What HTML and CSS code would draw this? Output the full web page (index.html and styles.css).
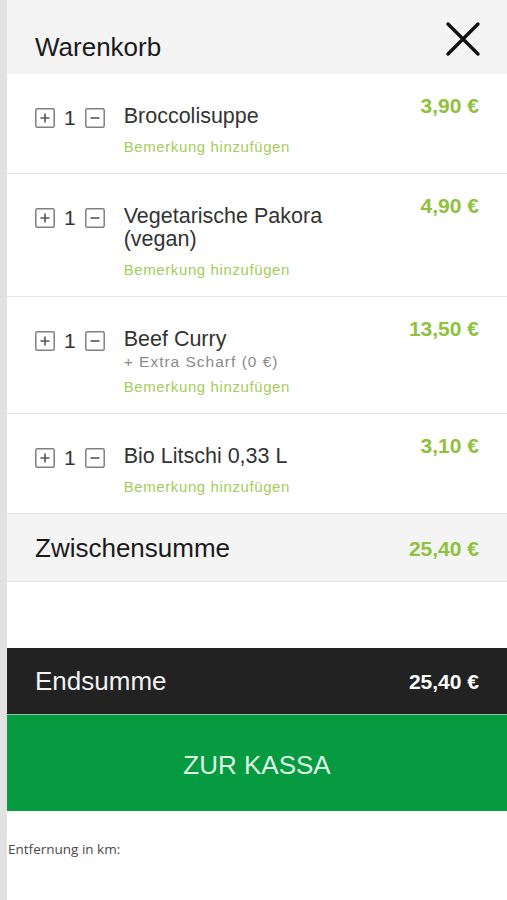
FILE: index.html
```html
<!DOCTYPE html>
<html lang="de">
<head>
    <meta charset="UTF-8">
    <meta name="viewport" content="width=device-width, initial-scale=1.0">
    <title>Warenkorb</title>
    <link rel="stylesheet" href="styles.css">
</head>
<body>
    <div class="side"></div>
    <div class="cart">
        <div class="cart-header">
            <h1>Warenkorb</h1>
            <button class="close" aria-label="Schließen">
                <svg width="36" height="36" viewBox="0 0 36 36">
                    <path d="M3 3 L33 33 M33 3 L3 33" stroke="#111" stroke-width="3.4" stroke-linecap="round" fill="none"/>
                </svg>
            </button>
        </div>

        <div class="item">
            <div class="qty">
                <svg class="qty-btn" viewBox="0 0 20 20"><rect x="0.8" y="0.8" width="18.4" height="18.4" rx="1.5"/><path d="M10 5.5 V14.5 M5.5 10 H14.5"/></svg>
                <span class="count">1</span>
                <svg class="qty-btn" viewBox="0 0 20 20"><rect x="0.8" y="0.8" width="18.4" height="18.4" rx="1.5"/><path d="M5.5 10 H14.5"/></svg>
            </div>
            <div class="info">
                <div class="name">Broccolisuppe</div>
                <div class="remark">Bemerkung hinzufügen</div>
            </div>
            <div class="price">3,90 €</div>
        </div>

        <div class="item">
            <div class="qty">
                <svg class="qty-btn" viewBox="0 0 20 20"><rect x="0.8" y="0.8" width="18.4" height="18.4" rx="1.5"/><path d="M10 5.5 V14.5 M5.5 10 H14.5"/></svg>
                <span class="count">1</span>
                <svg class="qty-btn" viewBox="0 0 20 20"><rect x="0.8" y="0.8" width="18.4" height="18.4" rx="1.5"/><path d="M5.5 10 H14.5"/></svg>
            </div>
            <div class="info">
                <div class="name">Vegetarische Pakora (vegan)</div>
                <div class="remark">Bemerkung hinzufügen</div>
            </div>
            <div class="price">4,90 €</div>
        </div>

        <div class="item">
            <div class="qty">
                <svg class="qty-btn" viewBox="0 0 20 20"><rect x="0.8" y="0.8" width="18.4" height="18.4" rx="1.5"/><path d="M10 5.5 V14.5 M5.5 10 H14.5"/></svg>
                <span class="count">1</span>
                <svg class="qty-btn" viewBox="0 0 20 20"><rect x="0.8" y="0.8" width="18.4" height="18.4" rx="1.5"/><path d="M5.5 10 H14.5"/></svg>
            </div>
            <div class="info">
                <div class="name">Beef Curry</div>
                <div class="extra">+ Extra Scharf (0 €)</div>
                <div class="remark">Bemerkung hinzufügen</div>
            </div>
            <div class="price">13,50 €</div>
        </div>

        <div class="item">
            <div class="qty">
                <svg class="qty-btn" viewBox="0 0 20 20"><rect x="0.8" y="0.8" width="18.4" height="18.4" rx="1.5"/><path d="M10 5.5 V14.5 M5.5 10 H14.5"/></svg>
                <span class="count">1</span>
                <svg class="qty-btn" viewBox="0 0 20 20"><rect x="0.8" y="0.8" width="18.4" height="18.4" rx="1.5"/><path d="M5.5 10 H14.5"/></svg>
            </div>
            <div class="info">
                <div class="name">Bio Litschi 0,33 L</div>
                <div class="remark">Bemerkung hinzufügen</div>
            </div>
            <div class="price">3,10 €</div>
        </div>

        <div class="subtotal">
            <span class="label">Zwischensumme</span>
            <span class="sum">25,40 €</span>
        </div>

        <div class="total">
            <span class="label">Endsumme</span>
            <span class="sum">25,40 €</span>
        </div>

        <button class="checkout">ZUR KASSA</button>

        <div class="distance">Entfernung in km:</div>
    </div>
</body>
</html>
```

FILE: styles.css
```css
body {
    margin: 0;
    display: flex;
    min-height: 100vh;
    font-family: 'Liberation Sans', Arial, sans-serif;
    color: #333;
    background: #ffffff;
}
.side {
    width: 7px;
    flex: none;
    background: #e2e2e2;
}
.cart {
    flex: 1;
    min-width: 0;
}
.cart-header {
    height: 74px;
    box-sizing: border-box;
    display: flex;
    justify-content: space-between;
    align-items: flex-start;
    padding: 21px 26px 0 28px;
    background: #f4f4f4;
}
.cart-header h1 {
    margin: 11px 0 0;
    font-size: 26px;
    line-height: 30px;
    font-weight: normal;
    color: #1a1a1a;
}
.close {
    padding: 0;
    border: none;
    background: none;
    width: 36px;
    height: 36px;
    cursor: pointer;
}
.close svg {
    display: block;
}
.item {
    display: flex;
    align-items: flex-start;
    padding: 20px 28px 17px;
    border-bottom: 1px solid #e6e6e6;
}
.qty {
    flex: none;
    display: flex;
    align-items: center;
    gap: 9px;
    height: 24px;
    margin-top: 12px;
    margin-right: 19px;
}
.qty-btn {
    width: 20px;
    height: 20px;
    display: block;
}
.qty-btn rect {
    fill: none;
    stroke: #808080;
    stroke-width: 1.5;
}
.qty-btn path {
    fill: none;
    stroke: #555;
    stroke-width: 1.6;
}
.count {
    font-size: 21px;
    line-height: 24px;
    color: #333;
}
.info {
    flex: 1;
    min-width: 0;
    margin-top: 11px;
}
.name {
    font-size: 21.5px;
    line-height: 23px;
    color: #333;
    padding-right: 8px;
}
.extra {
    font-size: 15.5px;
    line-height: 17px;
    letter-spacing: 1px;
    color: #8a8a8a;
    margin: 2px 0 -2px;
}
.remark {
    margin-top: 10px;
    font-size: 15px;
    line-height: 18px;
    letter-spacing: 0.6px;
    color: #a4cd58;
}
.price {
    flex: none;
    width: 92px;
    text-align: right;
    font-size: 21px;
    line-height: 23px;
    font-weight: bold;
    color: #8fc13e;
}
.subtotal {
    display: flex;
    justify-content: space-between;
    align-items: center;
    padding: 19px 28px 18px;
    background: #f4f4f4;
    border-bottom: 1px solid #e4e4e4;
}
.label {
    font-size: 26px;
    line-height: 30px;
    color: #1a1a1a;
}
.sum {
    font-size: 21px;
    line-height: 23px;
    font-weight: bold;
    color: #8fc13e;
}
.total {
    margin-top: 66px;
    height: 66px;
    box-sizing: border-box;
    display: flex;
    justify-content: space-between;
    align-items: center;
    padding: 0 28px;
    background: #222222;
}
.total .label {
    color: #f2f2f2;
}
.total .sum {
    color: #ffffff;
}
.checkout {
    display: block;
    width: 100%;
    height: 97px;
    box-sizing: border-box;
    padding: 5px 0 0;
    border: none;
    border-top: 1px solid #8cc7a0;
    background: #069a41;
    color: #dcf5e4;
    font-family: 'Liberation Sans', Arial, sans-serif;
    font-size: 26px;
    cursor: pointer;
}
.distance {
    margin-top: 29px;
    padding-left: 1px;
    font-family: 'Open Sans', sans-serif;
    font-size: 13.5px;
    line-height: 18px;
    color: #4a4a4a;
}
```
